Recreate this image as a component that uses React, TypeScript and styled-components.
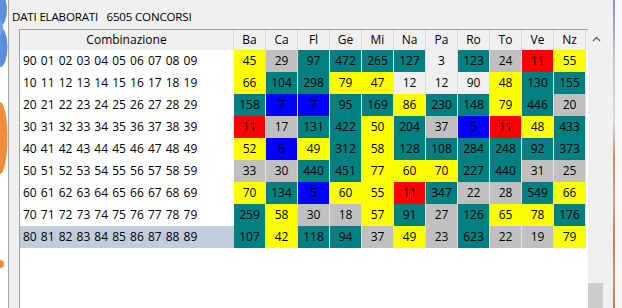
import React from "react";
import styled, { createGlobalStyle } from "styled-components";

const Global = createGlobalStyle`
  html, body { margin: 0; padding: 0; background: #f0f0f0; }
  body { font-family: "Open Sans", "Noto Sans", sans-serif; font-size: 12px; color: #000; }
  * { box-sizing: border-box; }
`;

type Tone = "Y" | "T" | "G" | "R" | "B" | "W";

const toneColor: Record<Tone, string> = {
  Y: "#ffff00",
  T: "#008080",
  G: "#c0c0c0",
  R: "#ff0000",
  B: "#0000ff",
  W: "#f0f0f0",
};

const headers = ["Ba", "Ca", "Fl", "Ge", "Mi", "Na", "Pa", "Ro", "To", "Ve", "Nz"];

type Row = { combo: string; cells: [number, Tone][]; selected?: boolean };

const rows: Row[] = [
  { combo: "90 01 02 03 04 05 06 07 08 09", cells: [[45, "Y"], [29, "G"], [97, "T"], [472, "T"], [265, "T"], [127, "T"], [3, "W"], [123, "T"], [24, "G"], [11, "R"], [55, "Y"]] },
  { combo: "10 11 12 13 14 15 16 17 18 19", cells: [[66, "Y"], [104, "T"], [298, "T"], [79, "Y"], [47, "Y"], [12, "W"], [12, "W"], [90, "W"], [48, "Y"], [130, "T"], [155, "T"]] },
  { combo: "20 21 22 23 24 25 26 27 28 29", cells: [[158, "T"], [7, "B"], [7, "B"], [95, "T"], [169, "T"], [86, "Y"], [230, "T"], [148, "T"], [79, "Y"], [446, "T"], [20, "G"]] },
  { combo: "30 31 32 33 34 35 36 37 38 39", cells: [[11, "R"], [17, "G"], [131, "T"], [422, "T"], [50, "Y"], [204, "T"], [37, "G"], [5, "B"], [11, "R"], [48, "Y"], [433, "T"]] },
  { combo: "40 41 42 43 44 45 46 47 48 49", cells: [[52, "Y"], [6, "B"], [49, "Y"], [312, "T"], [58, "Y"], [128, "T"], [108, "T"], [284, "T"], [248, "T"], [92, "T"], [373, "T"]] },
  { combo: "50 51 52 53 54 55 56 57 58 59", cells: [[33, "G"], [30, "G"], [440, "T"], [451, "T"], [77, "Y"], [60, "Y"], [70, "Y"], [227, "T"], [440, "T"], [31, "G"], [25, "G"]] },
  { combo: "60 61 62 63 64 65 66 67 68 69", cells: [[70, "Y"], [134, "T"], [5, "B"], [60, "Y"], [55, "Y"], [11, "R"], [347, "T"], [22, "G"], [28, "G"], [549, "T"], [66, "Y"]] },
  { combo: "70 71 72 73 74 75 76 77 78 79", cells: [[259, "T"], [58, "Y"], [30, "G"], [18, "G"], [57, "Y"], [91, "T"], [27, "G"], [126, "T"], [65, "Y"], [78, "Y"], [176, "T"]] },
  { combo: "80 81 82 83 84 85 86 87 88 89", cells: [[107, "T"], [42, "Y"], [118, "T"], [94, "T"], [37, "G"], [49, "Y"], [23, "G"], [623, "T"], [22, "G"], [19, "G"], [79, "Y"]], selected: true },
];

const Screen = styled.div`
  display: flex;
  width: 622px;
  height: 308px;
  overflow: hidden;
`;

const LeftEdge = styled.div`
  width: 9px;
  flex: none;
  background: #ffffff;
  border-right: 1px solid #a8a8a8;
  display: flex;
`;

const RightEdge = styled.div`
  width: 9px;
  flex: none;
  background-color: #f7f7f7;
  background-image: linear-gradient(
    to bottom,
    #8f8cc2 0px,
    #a7a5cf 28px,
    #c6c5dc 60px,
    #d9d8e2 120px,
    #c98a66 160px,
    #d7a488 200px,
    #c57c55 240px,
    #cf9373 280px,
    #c47a52 308px
  );
  background-size: 2px 100%;
  background-repeat: no-repeat;
  background-position: 0 0;
`;

const Window = styled.div`
  flex: 1;
  background: #f0f0f0;
  display: flex;
  flex-direction: column;
  min-width: 0;
`;

const Title = styled.div`
  height: 29px;
  padding: 10px 0 0 3px;
  line-height: 14px;
  white-space: pre;
  font-size: 11.6px;
  letter-spacing: -0.2px;
`;

const Frame = styled.div`
  flex: 1;
  display: flex;
  margin: 0 8px 0 10px;
  min-height: 0;
`;

const TableArea = styled.div`
  width: 569px;
  flex: none;
  background: #ffffff;
  border-top: 1px solid #a0a0a0;
  border-left: 1px solid #a0a0a0;
  display: flex;
  flex-direction: column;
`;

const HeaderRow = styled.div`
  display: flex;
  height: 20px;
  background: #f0f0f0;
`;

const HeaderCell = styled.div<{ $w: number }>`
  width: ${(p) => p.$w}px;
  flex: none;
  border-right: 1px solid #d5d5d5;
  text-align: center;
  line-height: 20px;
  font-size: 12px;
`;

const HeaderFiller = styled.div`
  flex: 1;
`;

const DataRow = styled.div`
  display: flex;
  height: 22px;
`;

const ComboCell = styled.div<{ $selected?: boolean }>`
  width: 214px;
  flex: none;
  padding-left: 3px;
  line-height: 22px;
  word-spacing: 1px;
  white-space: pre;
  background: ${(p) => (p.$selected ? "#c0cddb" : "#ffffff")};
`;

const ValueCell = styled.div<{ $tone: Tone }>`
  width: 32px;
  flex: none;
  background: ${(p) => toneColor[p.$tone]};
  border-right: 1px solid #dedede;
  text-align: center;
  line-height: 22px;
  color: #000;
`;

const Scrollbar = styled.div`
  width: 17px;
  flex: none;
  background: #f0f0f0;
  display: flex;
  flex-direction: column;
  justify-content: space-between;
`;

const ArrowButton = styled.div`
  height: 17px;
  display: flex;
  align-items: center;
  justify-content: center;
  margin-top: 1px;
`;

const Thumb = styled.div`
  width: 15px;
  height: 25px;
  background: #cdcdcd;
`;

export default function App() {
  return (
    <>
      <Global />
      <Screen>
        <LeftEdge>
          <svg width="8" height="308" viewBox="0 0 8 308">
            <ellipse cx="0" cy="10" rx="7" ry="16" fill="#5b8fdc" />
            <ellipse cx="0" cy="47" rx="7.5" ry="20" fill="#5b8fdc" />
            <ellipse cx="-1" cy="28" rx="4" ry="8" fill="#6f9fe4" />
            <ellipse cx="0" cy="138" rx="7.5" ry="36" fill="#f08c3e" />
            <circle cx="0" cy="264" r="4" fill="#f08c3e" />
          </svg>
        </LeftEdge>
        <Window>
          <Title>{"DATI ELABORATI   6505 CONCORSI"}</Title>
          <Frame>
            <TableArea>
              <HeaderRow>
                <HeaderCell $w={214}>Combinazione</HeaderCell>
                {headers.map((h) => (
                  <HeaderCell key={h} $w={32}>
                    {h}
                  </HeaderCell>
                ))}
                <HeaderFiller />
              </HeaderRow>
              {rows.map((r) => (
                <DataRow key={r.combo}>
                  <ComboCell $selected={r.selected}>{r.combo}</ComboCell>
                  {r.cells.map(([v, t], i) => (
                    <ValueCell key={i} $tone={t}>
                      {v}
                    </ValueCell>
                  ))}
                </DataRow>
              ))}
            </TableArea>
            <Scrollbar>
              <ArrowButton>
                <svg width="9" height="6" viewBox="0 0 9 6">
                  <polyline points="1,5 4.5,1.5 8,5" fill="none" stroke="#606060" strokeWidth="1.3" />
                </svg>
              </ArrowButton>
              <Thumb />
            </Scrollbar>
          </Frame>
        </Window>
        <RightEdge />
      </Screen>
    </>
  );
}
